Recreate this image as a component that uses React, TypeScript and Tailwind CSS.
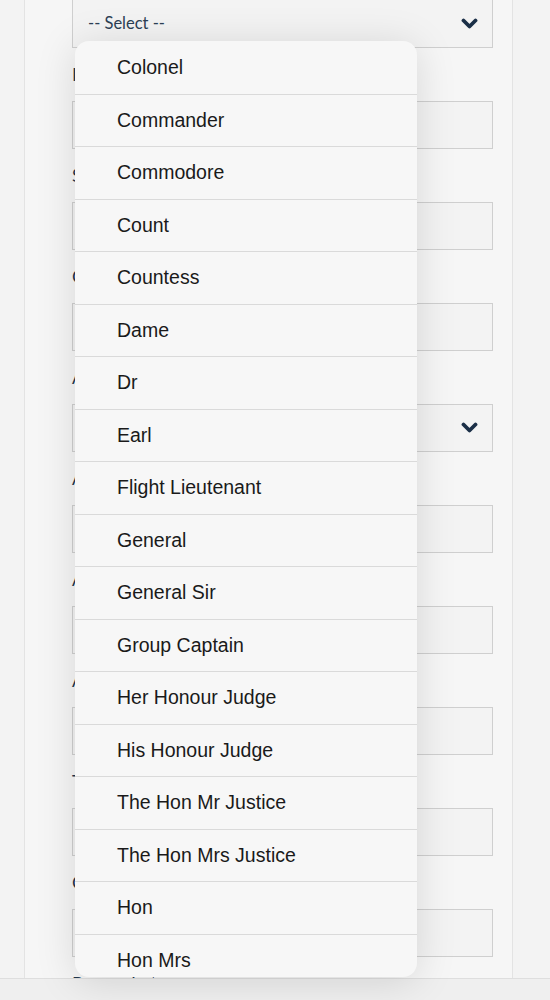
import React from "react";

const items = [
  "Colonel",
  "Commander",
  "Commodore",
  "Count",
  "Countess",
  "Dame",
  "Dr",
  "Earl",
  "Flight Lieutenant",
  "General",
  "General Sir",
  "Group Captain",
  "Her Honour Judge",
  "His Honour Judge",
  "The Hon Mr Justice",
  "The Hon Mrs Justice",
  "Hon",
  "Hon Mrs",
];

function Chevron() {
  return (
    <svg width="17" height="12" viewBox="0 0 17 12" className="shrink-0">
      <polyline
        points="2.5,2.5 8.5,8.5 14.5,2.5"
        fill="none"
        stroke="#1b2f47"
        strokeWidth="3.8"
        strokeLinecap="round"
        strokeLinejoin="round"
      />
    </svg>
  );
}

function Field({ label, select }: { label: string; select?: boolean }) {
  return (
    <div className="flex flex-col shrink-0">
      <div className="mt-[13px] h-[26px] leading-[26px] text-[18px] text-[#22364d] shrink-0">{label}</div>
      <div className="mt-[14px] h-[48px] shrink-0 border border-[#cfcfcf] bg-[#f3f3f3] flex items-center justify-end pr-[14px]">
        {select ? <Chevron /> : null}
      </div>
    </div>
  );
}

export default function App() {
  return (
    <div
      className="relative w-[550px] h-[1000px] overflow-hidden bg-[#f2f2f2] flex flex-col"
      style={{ fontFamily: "Lato, 'Liberation Sans', sans-serif" }}
    >
      <div className="h-[978px] shrink-0 flex">
        <div className="w-[24px] bg-[#f3f3f3]" />
        <div className="w-[489px] overflow-hidden border-x border-[#e3e3e3] bg-[#f6f6f6] pl-[47px] pr-[19px] flex flex-col">
          <div className="h-[49px] shrink-0 -mt-px border border-[#cfcfcf] bg-[#f3f3f3] flex items-center justify-between pl-[15px] pr-[14px]">
            <span className="text-[16.5px] text-[#2c3f55]">-- Select --</span>
            <Chevron />
          </div>
          <Field label="Initials" />
          <Field label="Surname" />
          <Field label="Company" />
          <Field label="Address type" select />
          <Field label="Address line 1" />
          <Field label="Address line 2" />
          <Field label="Address line 3" />
          <Field label="Town" />
          <Field label="County" />
          <div className="mt-[13px] h-[26px] shrink-0 leading-[26px] text-[18px] text-[#22364d]">Postcode *</div>
        </div>
        <div className="flex-1 bg-[#f3f3f3]" />
      </div>
      <div className="flex-1 border-t border-[#dedede] bg-[#efefef]" />

      <div
        className="absolute left-[75px] top-[41px] w-[342px] h-[936px] rounded-[14px] bg-[#f7f7f7] overflow-hidden shadow-[0_4px_40px_rgba(0,0,0,0.13)]"
        style={{ fontFamily: "'Liberation Sans', Arial, sans-serif" }}
      >
        {items.map((it, i) => (
          <div
            key={it}
            className={
              "h-[52.5px] flex items-center pl-[42px] text-[19.5px] text-[#1a1a1a] " +
              (i > 0 ? "border-t border-[#dadada]" : "")
            }
          >
            {it}
          </div>
        ))}
      </div>
    </div>
  );
}
